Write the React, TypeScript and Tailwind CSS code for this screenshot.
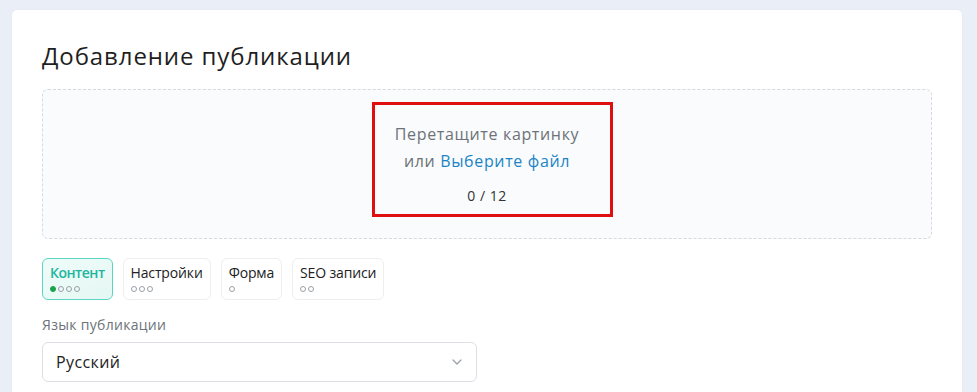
import React from "react";

function Dots({ total, active }: { total: number; active?: number }) {
  return (
    <div className="flex items-center gap-[2px] mt-[3px]">
      {Array.from({ length: total }).map((_, i) => (
        <span
          key={i}
          className={
            i === active
              ? "w-[6px] h-[6px] rounded-full bg-[#1aa34a] border border-[#1aa34a]"
              : "w-[6px] h-[6px] rounded-full border border-[#9aa0a6]"
          }
        />
      ))}
    </div>
  );
}

function Tab({ label, total, active, selected }: { label: string; total: number; active?: number; selected?: boolean }) {
  return (
    <div
      className={
        selected
          ? "h-[42px] px-[7px] pt-[4px] rounded-[6px] border border-[#5cd6c2] bg-gradient-to-br from-[#eefcf8] to-[#e6f8f4] flex flex-col"
          : "h-[42px] px-[7px] pt-[4px] rounded-[6px] border border-[#eeeeee] bg-white flex flex-col"
      }
    >
      <span
        className={
          selected
            ? "text-[14px] leading-[20px] font-semibold tracking-[-0.5px] text-[#22b59e]"
            : "text-[14px] leading-[20px] font-medium tracking-[-0.15px] text-[#222]"
        }
      >
        {label}
      </span>
      <Dots total={total} active={active} />
    </div>
  );
}

export default function App() {
  return (
    <div
      className="w-[977px] h-[392px] bg-[#e9eef7] pl-[12px] pt-[10px] overflow-hidden"
      style={{ fontFamily: "'Open Sans', 'Noto Sans', sans-serif" }}
    >
      <div className="w-[950px] h-[400px] bg-white rounded-[5px] px-[30px] pt-[30px] shadow-[0_0_3px_rgba(0,0,0,0.04)]">
        <h1 className="text-[24px] leading-[32px] tracking-[0.9px] text-[#1f1f1f] font-normal">Добавление публикации</h1>
        <div className="mt-[17px] h-[150px] rounded-[6px] border border-dashed border-[#d6dadf] bg-[#f9fbfc] flex items-start justify-center pt-[12px]">
          <div className="ml-[10px] w-[241px] h-[115px] border-[3px] border-[#e00f0f] flex flex-col items-center pt-[16px] pr-[10px]">
            <div className="text-[16px] leading-[27px] tracking-[0.65px] text-[#6d7278]">Перетащите картинку</div>
            <div className="text-[16px] leading-[27px] tracking-[0.65px] text-[#6d7278]">
              или <span className="text-[#1c84c6]">Выберите файл</span>
            </div>
            <div className="mt-[12px] text-[14px] leading-[18px] tracking-[0.5px] text-[#333]">0 / 12</div>
          </div>
        </div>
        <div className="mt-[19px] flex gap-[10px]">
          <Tab label="Контент" total={4} active={0} selected />
          <Tab label="Настройки" total={3} />
          <Tab label="Форма" total={1} />
          <Tab label="SEO записи" total={2} />
        </div>
        <div className="mt-[16px] text-[14px] leading-[18px] tracking-[0.3px] text-[#6d7278]">Язык публикации</div>
        <div className="mt-[8px] w-[435px] h-[40px] rounded-[6px] border border-[#dcdfe3] flex items-center justify-between pl-[13px] pr-[14px]">
          <span className="text-[16px] tracking-[0.4px] text-[#222]">Русский</span>
          <svg width="10" height="6" viewBox="0 0 10 6" fill="none">
            <path d="M1 1l4 4 4-4" stroke="#9aa0a6" strokeWidth="1.2" strokeLinecap="round" strokeLinejoin="round" />
          </svg>
        </div>
      </div>
    </div>
  );
}
